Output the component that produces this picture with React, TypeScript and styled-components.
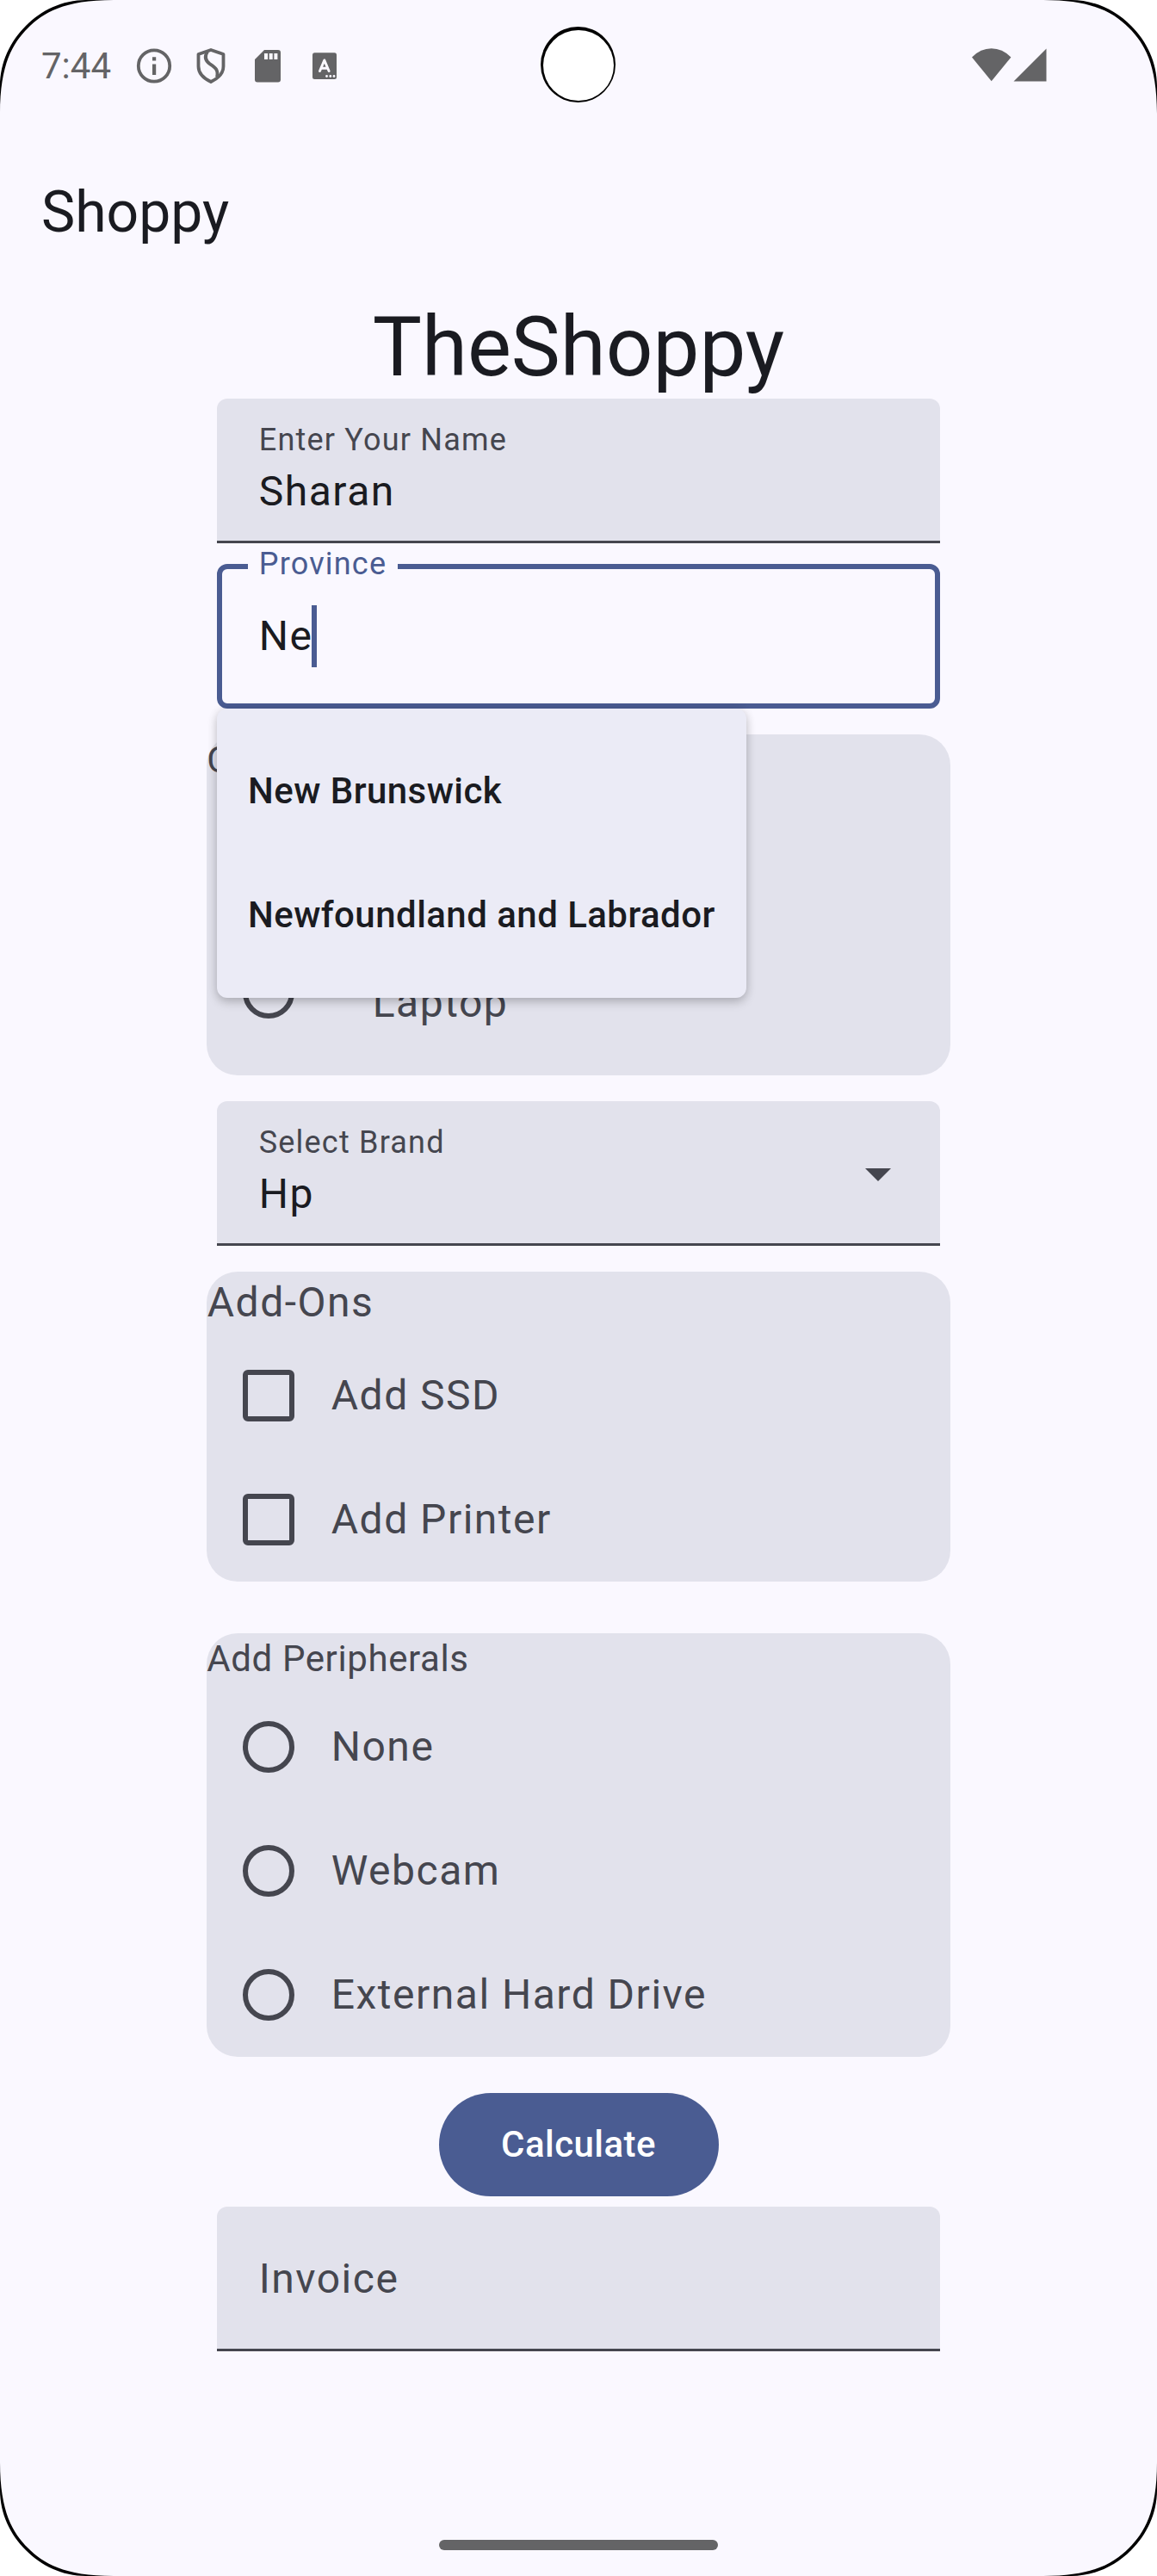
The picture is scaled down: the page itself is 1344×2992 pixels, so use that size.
import React from "react";
import styled, { createGlobalStyle, css } from "styled-components";

const color = {
  surface: "#faf8ff",
  fill: "#e2e2ec",
  menu: "#ebebf6",
  primary: "#4a5c92",
  onSurface: "#1a1b21",
  onVariant: "#45464f",
  status: "#646466",
};

const GlobalStyle = createGlobalStyle`
  html, body { margin: 0; padding: 0; background: #fff; }
  *, *::before, *::after { box-sizing: border-box; }
`;

const Screen = styled.div`
  position: relative;
  display: flex;
  flex-direction: column;
  width: 1344px;
  height: 2992px;
  overflow: hidden;
  background: ${color.surface};
  color: ${color.onVariant};
  font-family: Roboto, "Liberation Sans", sans-serif;
  font-kerning: normal;
`;

const StatusBar = styled.header`
  display: flex;
  align-items: center;
  justify-content: space-between;
  height: 151px;
  padding: 0 128px 0 48px;
  color: ${color.status};
`;

const StatusGroup = styled.div`
  display: flex;
  align-items: center;
`;

const Clock = styled.span`
  width: 107px;
  font-size: 42px;
  line-height: 60px;
  padding-top: 3px;
`;

const NoticeIcon = styled.svg`
  display: block;
  width: 48px;
  height: 48px;
  margin-right: 18px;
  fill: currentColor;
`;

const SignalIcon = styled.svg<{ $w: number }>`
  display: block;
  width: ${(p) => p.$w}px;
  height: 40px;
  fill: currentColor;
`;

const Camera = styled.div`
  position: absolute;
  left: 628px;
  top: 31px;
  width: 87px;
  height: 88px;
  border-radius: 50%;
  background: #000;
  padding: 4px 2.5px 2px;
`;

const Lens = styled.div`
  width: 100%;
  height: 100%;
  border-radius: 50%;
  background: #fff;
`;

const Corner = styled.svg<{ $x: "left" | "right"; $y: "top" | "bottom" }>`
  position: absolute;
  width: 132px;
  height: 132px;
  ${(p) => p.$x}: 0;
  ${(p) => p.$y}: 0;
  transform: scale(${(p) => (p.$x === "left" ? 1 : -1)}, ${(p) => (p.$y === "top" ? 1 : -1)});
`;

const AppBar = styled.div`
  display: flex;
  align-items: center;
  height: 192px;
  padding: 0 48px;
  color: ${color.onSurface};
  font-size: 66px;
  line-height: 84px;
`;

const Form = styled.main`
  display: flex;
  flex-direction: column;
  align-items: center;
`;

const Title = styled.h1`
  margin: 0;
  color: ${color.onSurface};
  font-size: 96px;
  font-weight: 400;
  line-height: 120px;
`;

const bodyLarge = css`
  font-size: 48px;
  line-height: 72px;
  letter-spacing: 1.5px;
  text-indent: 0.75px;
`;

const bodyMedium = css`
  font-size: 42px;
  line-height: 60px;
  letter-spacing: 0.6px;
  text-indent: 0.3px;
`;

const labelLarge = css`
  font-size: 42px;
  font-weight: 500;
  line-height: 60px;
  letter-spacing: 0.45px;
`;

const FilledField = styled.div`
  display: flex;
  align-items: center;
  justify-content: space-between;
  width: 840px;
  height: 168px;
  padding: 0 57px 0 48px;
  border-radius: 12px 12px 0 0;
  background: ${color.fill};
  box-shadow: inset 0 -3px 0 ${color.onVariant};
`;

const FieldText = styled.div`
  display: flex;
  flex-direction: column;
`;

const FieldLabel = styled.span`
  font-size: 36px;
  line-height: 48px;
  letter-spacing: 1.2px;
  text-indent: 0.75px;
`;

const FieldValue = styled.span`
  ${bodyLarge}
  color: ${color.onSurface};
`;

const Placeholder = styled.span`
  ${bodyLarge}
`;

const Arrow = styled.svg`
  display: block;
  width: 30px;
  height: 15px;
  margin-top: 3px;
  fill: currentColor;
`;

const OutlinedField = styled.div`
  position: relative;
  display: flex;
  align-items: center;
  width: 840px;
  height: 168px;
  margin: 24px 0 30px;
  padding: 0 42px;
  border: 6px solid ${color.primary};
  border-radius: 12px;
`;

const NotchLabel = styled(FieldLabel)`
  position: absolute;
  left: 30px;
  top: -30px;
  width: 174px;
  padding: 0 12px;
  background: ${color.surface};
  color: ${color.primary};
`;

const Cursor = styled.span`
  width: 6px;
  height: 72px;
  margin-left: -1.5px;
  background: ${color.primary};
`;

const Menu = styled.ul`
  position: absolute;
  z-index: 2;
  left: -6px;
  top: 162px;
  width: 615px;
  margin: 0;
  padding: 24px 0;
  list-style: none;
  border-radius: 12px;
  background: ${color.menu};
  box-shadow: 0 5px 12px rgba(0, 0, 0, 0.2), 0 0 12px rgba(0, 0, 0, 0.08);
`;

const MenuItem = styled.li`
  ${labelLarge}
  display: flex;
  align-items: center;
  height: 144px;
  padding: 0 36px;
  color: ${color.onSurface};
  white-space: nowrap;
`;

const Card = styled.section<{ $after: number }>`
  width: 864px;
  margin-bottom: ${(p) => p.$after}px;
  border-radius: 36px;
  background: ${color.fill};
`;

const CardTitle = styled.div<{ $large?: boolean }>`
  ${(p) => (p.$large ? bodyLarge : bodyMedium)}
`;

const Option = styled.label<{ $spacious?: boolean }>`
  display: flex;
  align-items: ${(p) => (p.$spacious ? "flex-start" : "center")};
  height: ${(p) => (p.$spacious ? 168 : 144)}px;
`;

const OptionText = styled.span<{ $spacious?: boolean }>`
  ${bodyLarge}
  padding: ${(p) => (p.$spacious ? "48px" : "0")};
`;

const Control = styled.span<{ $round?: boolean }>`
  flex: none;
  width: 60px;
  height: 60px;
  margin: 42px;
  border: 6px solid currentColor;
  border-radius: ${(p) => (p.$round ? "50%" : "6px")};
`;

const Gap = styled.div`
  height: 30px;
`;

const CalculateButton = styled.button`
  ${labelLarge}
  min-width: 325px;
  height: 120px;
  margin: 12px 0;
  padding: 0 72px;
  border: 0;
  border-radius: 60px;
  background: ${color.primary};
  color: #fff;
  font-family: inherit;
  white-space: nowrap;
`;

const HomeBar = styled.div`
  width: 324px;
  height: 12px;
  margin: auto auto 30px;
  border-radius: 6px;
  background: ${color.status};
`;

function ScreenCorner({ x, y }: { x: "left" | "right"; y: "top" | "bottom" }) {
  return (
    <Corner $x={x} $y={y} viewBox="0 0 132 132">
      <path d="M0 0H132C74 0 50 15 32.500 32.500C15 50 0 74 0 132Z" fill="#000" />
      <path d="M0 0H100C72 0 48 12 30 30C12 48 0 72 0 100Z" fill="#fff" />
    </Corner>
  );
}

function Field({ label, value }: { label: string; value?: string }) {
  return value ? (
    <FieldText>
      <FieldLabel>{label}</FieldLabel>
      <FieldValue>{value}</FieldValue>
    </FieldText>
  ) : (
    <Placeholder>{label}</Placeholder>
  );
}

export default function App() {
  return (
    <>
      <GlobalStyle />
      <Screen>
        <StatusBar>
          <StatusGroup>
            <Clock>7:44</Clock>
            <NoticeIcon viewBox="155 51 48 48">
              <circle cx="179" cy="75.500" r="18.200" fill="none" stroke="currentColor" strokeWidth="3.800" />
              <path d="M177 65.300h4.200v4.200H177zM177 73.500h4.200v12.500H177z" />
            </NoticeIcon>
            <NoticeIcon viewBox="221 51 48 48">
              <path
                d="M245 57l14.500 5v14c0 8-6 14-14.500 18c-8.500-4-14.500-10-14.500-18V62z"
                fill="none"
                stroke="currentColor"
                strokeWidth="3.800"
                strokeLinejoin="round"
              />
              <path
                d="M241 59c-4 6-2 11 3 14.500c6 4 10 6.500 8 15"
                fill="none"
                stroke="currentColor"
                strokeWidth="3.800"
              />
            </NoticeIcon>
            <NoticeIcon viewBox="287 51 48 48">
              <path
                fillRule="evenodd"
                d="M307 57h16a3 3 0 0 1 3 3v31.500a3 3 0 0 1-3 3h-24a3 3 0 0 1-3-3V68zM307 61v7h4v-7zM312.700 61v7h4v-7zM318.400 61v7h4v-7z"
              />
            </NoticeIcon>
            <NoticeIcon viewBox="353 51 48 48">
              <rect x="363" y="60.300" width="28" height="30.700" rx="2.500" />
              <path
                d="M371.500 81.500l5.300-12.500l5.300 12.500M373.500 78.300h6.600"
                fill="none"
                stroke={color.surface}
                strokeWidth="3"
                strokeLinecap="round"
                strokeLinejoin="round"
              />
              <g fill={color.surface}>
                <circle cx="379.500" cy="87.500" r="1.400" />
                <circle cx="383.800" cy="87.500" r="1.400" />
                <circle cx="388" cy="87.500" r="1.400" />
              </g>
            </NoticeIcon>
          </StatusGroup>
          <StatusGroup>
            <SignalIcon $w={48} viewBox="1128 55 48 40">
              <path d="M1129 65.500Q1139 55.300 1151.700 55.300T1174.400 65.500L1151.700 93.200z" />
            </SignalIcon>
            <SignalIcon $w={40} viewBox="1176 55 40 40">
              <path d="M1177.500 93.500h38V55.500z" />
            </SignalIcon>
          </StatusGroup>
        </StatusBar>
        <Camera>
          <Lens />
        </Camera>

        <AppBar>Shoppy</AppBar>

        <Form>
          <Title>TheShoppy</Title>
          <FilledField>
            <Field label="Enter Your Name" value="Sharan" />
          </FilledField>
          <OutlinedField>
            <NotchLabel>Province</NotchLabel>
            <FieldValue>Ne</FieldValue>
            <Cursor />
            <Menu>
              <MenuItem>New Brunswick</MenuItem>
              <MenuItem>Newfoundland and Labrador</MenuItem>
            </Menu>
          </OutlinedField>

          <Card $after={30}>
            <CardTitle>C</CardTitle>
            <Option $spacious>
              <Control $round />
            </Option>
            <Option $spacious>
              <Control $round />
              <OptionText $spacious>Laptop</OptionText>
            </Option>
          </Card>

          <FilledField>
            <Field label="Select Brand" value="Hp" />
            <Arrow viewBox="0 0 30 15">
              <path d="M0 0h30L15 15z" />
            </Arrow>
          </FilledField>
          <Gap />

          <Card $after={60}>
            <CardTitle $large>Add-Ons</CardTitle>
            {["Add SSD", "Add Printer"].map((name) => (
              <Option key={name}>
                <Control />
                <OptionText>{name}</OptionText>
              </Option>
            ))}
          </Card>

          <Card $after={30}>
            <CardTitle>Add Peripherals</CardTitle>
            {["None", "Webcam", "External Hard Drive"].map((name) => (
              <Option key={name}>
                <Control $round />
                <OptionText>{name}</OptionText>
              </Option>
            ))}
          </Card>

          <CalculateButton>Calculate</CalculateButton>
          <FilledField>
            <Field label="Invoice" />
          </FilledField>
        </Form>

        <HomeBar />
        <ScreenCorner x="left" y="top" />
        <ScreenCorner x="right" y="top" />
        <ScreenCorner x="left" y="bottom" />
        <ScreenCorner x="right" y="bottom" />
      </Screen>
    </>
  );
}
